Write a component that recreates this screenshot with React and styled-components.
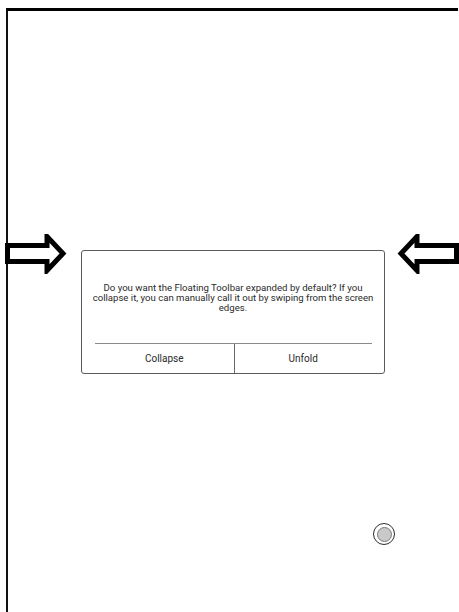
import React from "react";
import styled, { createGlobalStyle } from "styled-components";

const GlobalStyle = createGlobalStyle`
  html, body {
    margin: 0;
    padding: 0;
    background: #fff;
  }
  body {
    font-family: Roboto, "Noto Sans", "Liberation Sans", sans-serif;
  }
`;

const Page = styled.div`
  position: relative;
  width: 459px;
  height: 612px;
  box-sizing: border-box;
  padding: 8px 1px 0 6px;
  display: flex;
  flex-direction: column;
  overflow: hidden;
  background: #fff;
`;

const Screen = styled.div`
  flex: 1;
  border-top: 3px solid #000;
  border-left: 2px solid #111;
  display: flex;
  align-items: center;
  justify-content: center;
`;

const Dialog = styled.div`
  width: 304px;
  height: 124px;
  box-sizing: border-box;
  border: 1px solid #5a5a5a;
  border-radius: 3px;
  background: #fff;
  display: flex;
  flex-direction: column;
`;

const Message = styled.p`
  flex: 1;
  margin: 0;
  padding: 32px 8px 0;
  font-size: 9.6px;
  line-height: 10.3px;
  color: #2a2a2a;
  text-align: center;
`;

const Actions = styled.div`
  margin: 0 12px 0 13px;
  height: 29px;
  border-top: 1px solid #8a8a8a;
  display: grid;
  grid-template-columns: 1fr 1fr;
`;

const ActionButton = styled.button`
  border: 0;
  border-left: ${(p) => (p.$divided ? "1px solid #6a6a6a" : "0")};
  background: transparent;
  padding: 0;
  font-family: inherit;
  font-size: 10px;
  color: #2a2a2a;
  cursor: pointer;
`;

const Marker = styled.svg`
  position: absolute;
  top: 234px;
  left: ${(p) => p.$left}px;
  width: 62px;
  height: 40px;
  transform: ${(p) => (p.$flip ? "scaleX(-1)" : "none")};
`;

const FloatingBall = styled.div`
  position: absolute;
  left: 373px;
  top: 523px;
  width: 22px;
  height: 22px;
  box-sizing: border-box;
  border: 1.6px solid #2e2e2e;
  border-radius: 50%;
  display: flex;
  align-items: center;
  justify-content: center;
  background: #fff;
`;

const BallCore = styled.div`
  width: 15px;
  height: 15px;
  box-sizing: border-box;
  border: 1px solid #7a7a7a;
  border-radius: 50%;
  background: #c9c9c9;
`;

const Arrow = ({ left, flip }) => (
  <Marker $left={left} $flip={flip} viewBox="0 0 62 40">
    <path
      d="M2.5 11.5 H42 V2.5 L58 19.5 L42 36.5 V27.5 H2.5 Z"
      fill="#fff"
      stroke="#000"
      strokeWidth="5"
      strokeLinejoin="miter"
    />
  </Marker>
);

export default function App() {
  return (
    <>
      <GlobalStyle />
      <Page>
        <Screen>
          <Dialog>
            <Message>
              Do you want the Floating Toolbar expanded by default? If you
              collapse it, you can manually call it out by swiping from the
              screen edges.
            </Message>
            <Actions>
              <ActionButton>Collapse</ActionButton>
              <ActionButton $divided>Unfold</ActionButton>
            </Actions>
          </Dialog>
        </Screen>
        <Arrow left={5} />
        <Arrow left={397} flip />
        <FloatingBall>
          <BallCore />
        </FloatingBall>
      </Page>
    </>
  );
}
